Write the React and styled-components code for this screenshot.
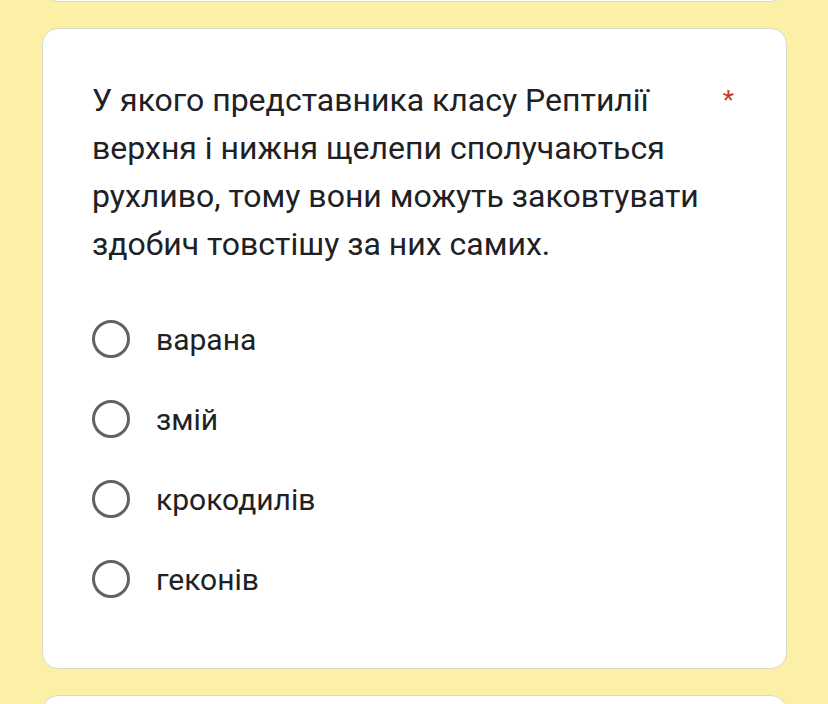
import React from 'react';
import styled, { createGlobalStyle } from 'styled-components';

const Global = createGlobalStyle`
  html, body {
    margin: 0;
    padding: 0;
    background: #fcefa6;
  }
  body {
    font-family: Roboto, "Liberation Sans", sans-serif;
  }
`;

const Page = styled.div`
  display: flex;
  flex-direction: column;
  gap: 26px;
  padding: 0 41px 0 42px;
  margin-top: -41px;
  height: 745px;
  overflow: hidden;
  box-sizing: border-box;
`;

const Card = styled.div`
  background: #fff;
  border: 1.5px solid #dcd9c6;
  border-radius: 16px;
  flex-shrink: 0;
  height: ${p => p.h}px;
  box-sizing: border-box;
`;

const QuestionCard = styled(Card)`
  padding: 47px 48px 0 49px;
`;

const Header = styled.div`
  display: flex;
  align-items: flex-start;
  justify-content: space-between;
`;

const Question = styled.div`
  font-size: 32px;
  line-height: 48px;
  color: #202124;
  width: 630px;
`;

const Required = styled.span`
  color: #c5392b;
  font-size: 26px;
  line-height: 48px;
  margin-right: 4px;
`;

const Options = styled.div`
  display: flex;
  flex-direction: column;
  gap: 40px;
  margin-top: 51px;
`;

const Option = styled.label`
  display: flex;
  align-items: center;
  gap: 26px;
  height: 40px;
  font-size: 30px;
  color: #202124;
`;

const Radio = styled.span`
  width: 38px;
  height: 38px;
  box-sizing: border-box;
  border: 3.5px solid #5f6368;
  border-radius: 50%;
  flex-shrink: 0;
`;

const options = ['варана', 'змій', 'крокодилів', 'геконів'];

export default function App() {
  return (
    <>
      <Global />
      <Page>
        <Card h={43} />
        <QuestionCard h={641}>
          <Header>
            <Question>
              У якого представника класу Рептилії верхня і нижня щелепи сполучаються рухливо, тому вони можуть заковтувати здобич товстішу за них самих.
            </Question>
            <Required>*</Required>
          </Header>
          <Options>
            {options.map(o => (
              <Option key={o}>
                <Radio />
                {o}
              </Option>
            ))}
          </Options>
        </QuestionCard>
        <Card h={200} />
      </Page>
    </>
  );
}
